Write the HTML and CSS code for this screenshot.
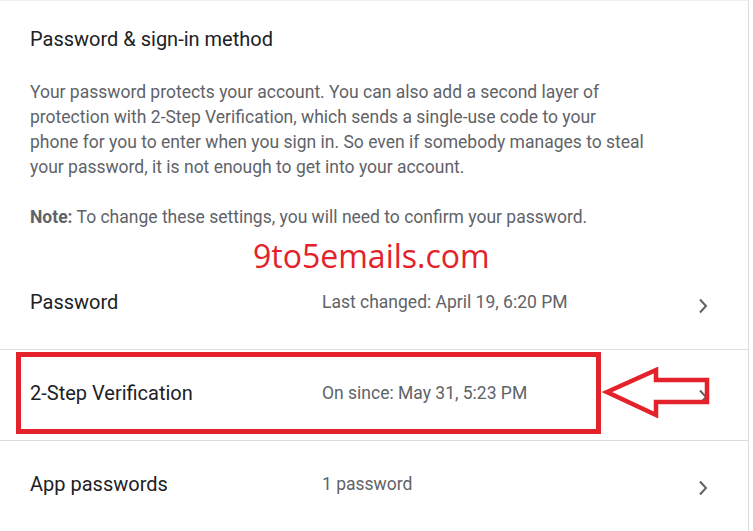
FILE: index.html
```html
<!DOCTYPE html>
<html>
<head>
<meta charset="utf-8">
<link rel="stylesheet" href="styles.css">
</head>
<body>
<div class="card">
  <div class="header">
    <h2 class="title">Password &amp; sign-in method</h2>
    <p class="desc">Your password protects your account. You can also add a second layer of protection with 2-Step Verification, which sends a single-use code to your phone for you to enter when you sign in. So even if somebody manages to steal your password, it is not enough to get into your account.</p>
    <p class="note"><b>Note:</b> To change these settings, you will need to confirm your password.</p>
    <div class="watermark">9to5emails.com</div>
  </div>
  <div class="row">
    <div class="label">Password</div>
    <div class="value">Last changed: April 19, 6:20 PM</div>
    <svg class="chev" width="12" height="18" viewBox="0 0 12 18"><polyline points="3,2.5 9,9 3,15.5" fill="none" stroke="#5f6368" stroke-width="2"/></svg>
  </div>
  <div class="row sep">
    <div class="label">2-Step Verification</div>
    <div class="value">On since: May 31, 5:23 PM</div>
    <svg class="chev" width="12" height="18" viewBox="0 0 12 18"><polyline points="3,2.5 9,9 3,15.5" fill="none" stroke="#5f6368" stroke-width="2"/></svg>
    <div class="hl-box"></div>
    <svg class="arrow" width="110" height="54" viewBox="0 0 110 54"><polygon points="5,25 54,3 54,13 105,13 105,35 54,35 54,48" fill="none" stroke="#e3222b" stroke-width="4.5" stroke-linejoin="miter"/></svg>
  </div>
  <div class="row sep">
    <div class="label">App passwords</div>
    <div class="value">1 password</div>
    <svg class="chev" width="12" height="18" viewBox="0 0 12 18"><polyline points="3,2.5 9,9 3,15.5" fill="none" stroke="#5f6368" stroke-width="2"/></svg>
  </div>
</div>
</body>
</html>
```
FILE: styles.css
```css
html, body {
  margin: 0;
  padding: 0;
  background: #fff;
}
body {
  font-family: Roboto, "Liberation Sans", Arial, sans-serif;
  color: #202124;
  overflow: hidden;
}
.card {
  width: 748px;
  border-right: 1px solid #dadce0;
  border-top: 1px solid #eeeeee;
}
.header {
  position: relative;
  padding: 26px 30px 29px 30px;
}
.title {
  margin: 0;
  font-size: 20px;
  font-weight: 400;
  line-height: 24px;
  color: #202124;
}
.desc {
  margin: 29px 0 0 0;
  font-size: 17.5px;
  line-height: 25px;
  color: #5f6368;
  width: 616px;
}
.note {
  margin: 25px 0 0 0;
  font-size: 17.5px;
  line-height: 25px;
  color: #5f6368;
}
.note b {
  font-weight: 700;
  color: #5f6368;
}
.watermark {
  position: absolute;
  left: 253px;
  top: 234px;
  font-family: "Open Sans", "Noto Sans", sans-serif;
  font-size: 32px;
  line-height: 42px;
  color: #e3222b;
}
.row {
  position: relative;
  display: flex;
  align-items: center;
  height: 90px;
  padding-left: 30px;
}
.row.sep {
  border-top: 1px solid #dadce0;
}
.label {
  width: 292px;
  font-size: 20px;
  color: #202124;
  margin-top: -4px;
}
.value {
  flex: 1;
  font-size: 17.5px;
  color: #5f6368;
  margin-top: -4px;
}
.chev {
  margin-right: 39px;
  margin-top: 4px;
}
.hl-box {
  position: absolute;
  left: 16px;
  top: 2px;
  width: 575px;
  height: 72px;
  border: 5px solid #e3222b;
}
.arrow {
  position: absolute;
  left: 602px;
  top: 17px;
}
```
